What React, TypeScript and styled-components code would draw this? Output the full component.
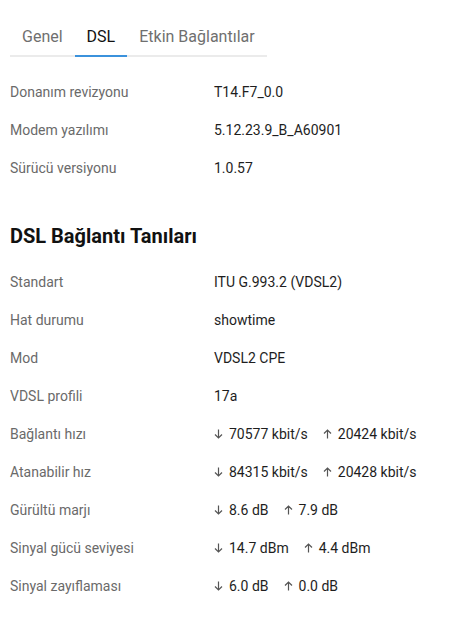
import React from 'react'
import styled, { createGlobalStyle } from 'styled-components'

const GlobalStyle = createGlobalStyle`
  body {
    margin: 0;
    background: #fff;
    font-family: Roboto, 'Liberation Sans', Arial, sans-serif;
  }
`

const Page = styled.div`
  padding: 0 10px;
  width: 455px;
  box-sizing: border-box;
`

const TabBar = styled.div`
  display: inline-flex;
  margin-top: 17px;
  border-bottom: 2px solid #ebebeb;
`

const Tab = styled.div<{ $active?: boolean }>`
  height: 38px;
  line-height: 40px;
  padding: 0 12px;
  font-size: 16px;
  color: ${p => (p.$active ? '#111' : '#6f6f6f')};
  position: relative;

  &::after {
    content: '';
    position: absolute;
    left: 0;
    right: 0;
    bottom: -2px;
    height: 2px;
    background: ${p => (p.$active ? '#3b92dc' : 'transparent')};
  }
`

const Table = styled.div`
  display: flex;
  flex-direction: column;
  margin-top: 16px;
`

const Row = styled.div`
  display: grid;
  grid-template-columns: 204px 1fr;
  height: 38px;
  align-items: center;
  font-size: 14px;
`

const Label = styled.div`
  color: #6a6a6a;
`

const Value = styled.div`
  color: #1e1e1e;
  display: flex;
  align-items: center;
`

const Heading = styled.h2`
  margin: 30px 0 0;
  font-size: 20px;
  font-weight: 700;
  color: #111;
  line-height: 38px;

  & + ${Table} {
    margin-top: 8px;
  }
`

const Pair = styled.span`
  display: inline-flex;
  align-items: center;
  gap: 6px;
  margin-right: 15px;
`

const ArrowIcon = styled.svg<{ $up?: boolean }>`
  width: 9px;
  height: 10px;
  flex: none;
  transform: ${p => (p.$up ? 'rotate(180deg)' : 'none')};
`

const Arrow: React.FC<{ up?: boolean }> = ({ up }) => (
  <ArrowIcon viewBox="0 0 9 10" $up={up}>
    <path d="M4.5 0.5 V9 M1 5.5 L4.5 9 L8 5.5" stroke="#555" strokeWidth="1.2" fill="none" />
  </ArrowIcon>
)

type Item = { label: string; value?: string; down?: string; up?: string }

const general: Item[] = [
  { label: 'Donanım revizyonu', value: 'T14.F7_0.0' },
  { label: 'Modem yazılımı', value: '5.12.23.9_B_A60901' },
  { label: 'Sürücü versiyonu', value: '1.0.57' },
]

const dsl: Item[] = [
  { label: 'Standart', value: 'ITU G.993.2 (VDSL2)' },
  { label: 'Hat durumu', value: 'showtime' },
  { label: 'Mod', value: 'VDSL2 CPE' },
  { label: 'VDSL profili', value: '17a' },
  { label: 'Bağlantı hızı', down: '70577 kbit/s', up: '20424 kbit/s' },
  { label: 'Atanabilir hız', down: '84315 kbit/s', up: '20428 kbit/s' },
  { label: 'Gürültü marjı', down: '8.6 dB', up: '7.9 dB' },
  { label: 'Sinyal gücü seviyesi', down: '14.7 dBm', up: '4.4 dBm' },
  { label: 'Sinyal zayıflaması', down: '6.0 dB', up: '0.0 dB' },
]

const Rows: React.FC<{ items: Item[] }> = ({ items }) => (
  <Table>
    {items.map(it => (
      <Row key={it.label}>
        <Label>{it.label}</Label>
        <Value>
          {it.value ?? (
            <>
              <Pair>
                <Arrow />
                {it.down}
              </Pair>
              <Pair>
                <Arrow up />
                {it.up}
              </Pair>
            </>
          )}
        </Value>
      </Row>
    ))}
  </Table>
)

const App: React.FC = () => (
  <Page>
    <GlobalStyle />
    <TabBar>
      <Tab>Genel</Tab>
      <Tab $active>DSL</Tab>
      <Tab>Etkin Bağlantılar</Tab>
    </TabBar>
    <Rows items={general} />
    <Heading>DSL Bağlantı Tanıları</Heading>
    <Rows items={dsl} />
  </Page>
)

export default App
